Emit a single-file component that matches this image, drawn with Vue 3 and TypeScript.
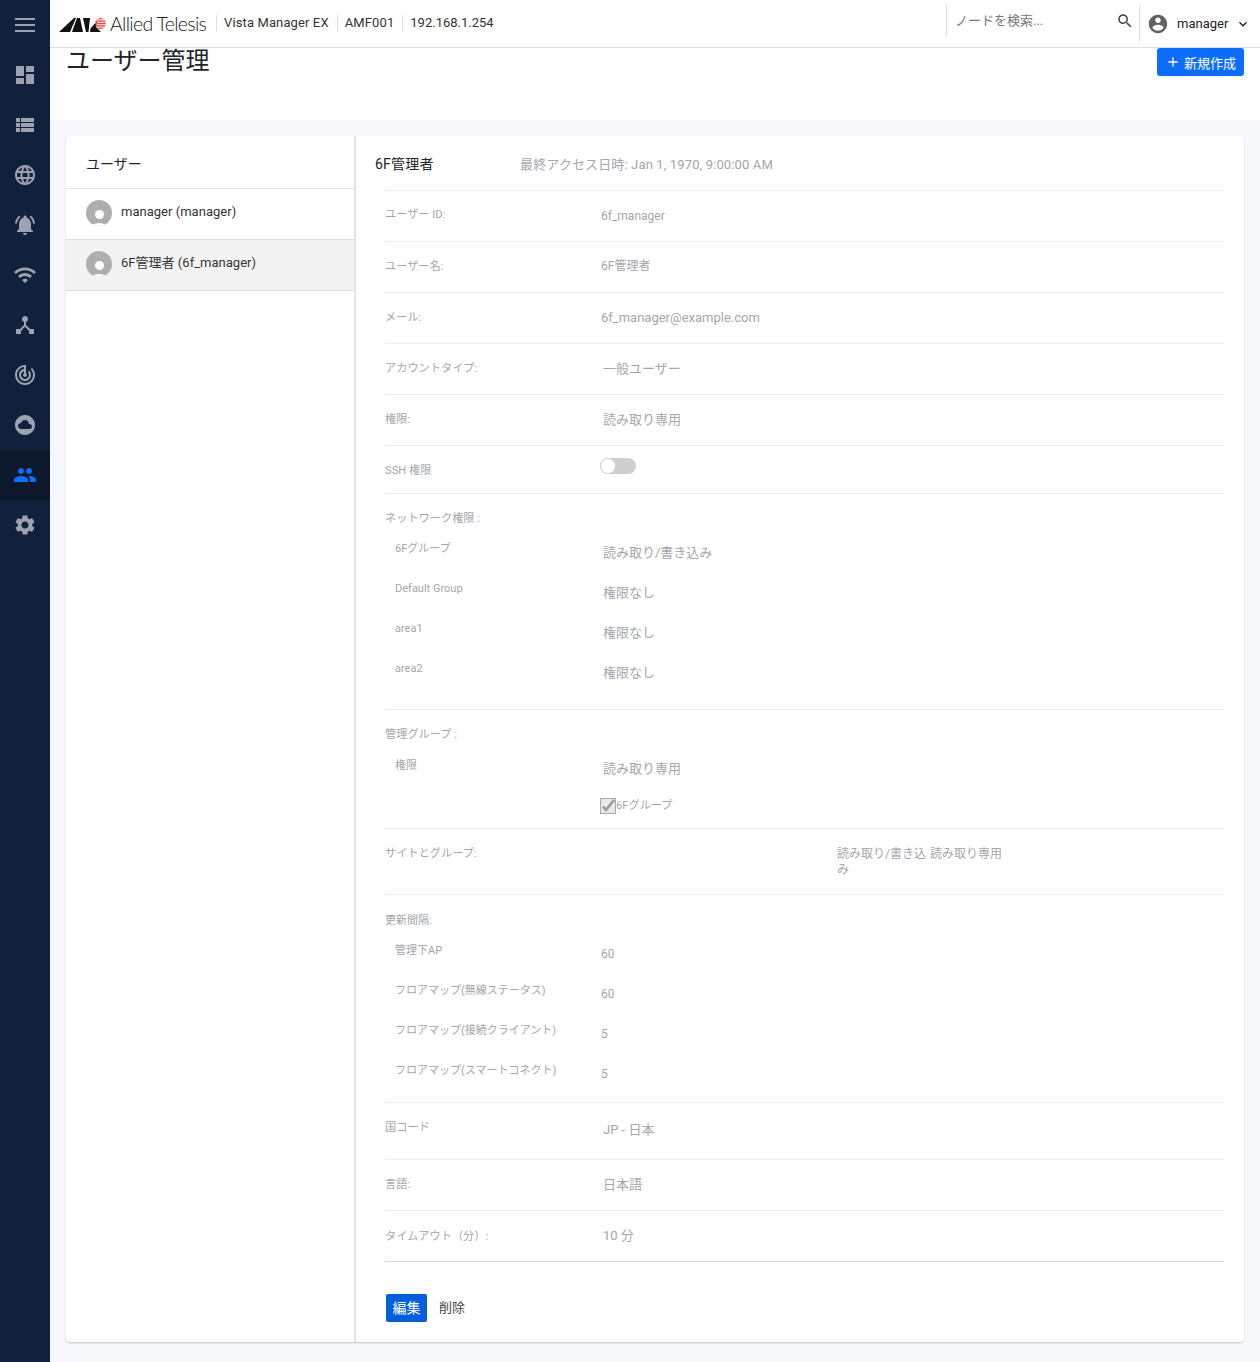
<script setup lang="ts">
const navIcons: string[] = [
  'M3 13h8V3H3v10zm0 8h8v-6H3v6zm10 0h8V11h-8v10zm0-18v6h8V3h-8z',
  'M3 14h4v-4H3v4zm0 5h4v-4H3v4zM3 9h4V5H3v4zm5 5h13v-4H8v4zm0 5h13v-4H8v4zM8 5v4h13V5H8z',
  'M11.99 2C6.47 2 2 6.48 2 12s4.47 10 9.99 10C17.52 22 22 17.52 22 12S17.52 2 11.99 2zm6.93 6h-2.95c-.32-1.25-.78-2.45-1.38-3.56 1.84.63 3.37 1.91 4.33 3.56zM12 4.04c.83 1.2 1.48 2.53 1.91 3.96h-3.82c.43-1.43 1.08-2.76 1.91-3.96zM4.26 14C4.1 13.36 4 12.69 4 12s.1-1.36.26-2h3.38c-.08.66-.14 1.32-.14 2 0 .68.06 1.34.14 2H4.26zm.82 2h2.95c.32 1.25.78 2.45 1.38 3.56-1.84-.63-3.37-1.9-4.33-3.56zm2.95-8H5.08c.96-1.66 2.49-2.93 4.33-3.56C8.81 5.55 8.35 6.75 8.03 8zM12 19.96c-.83-1.2-1.48-2.53-1.91-3.96h3.82c-.43 1.43-1.08 2.76-1.91 3.96zM14.34 14H9.66c-.09-.66-.16-1.32-.16-2 0-.68.07-1.35.16-2h4.68c.09.65.16 1.32.16 2 0 .68-.07 1.34-.16 2zm.25 5.56c.6-1.11 1.06-2.31 1.38-3.56h2.95c-.96 1.65-2.49 2.93-4.33 3.56zM16.36 14c.08-.66.14-1.32.14-2 0-.68-.06-1.34-.14-2h3.38c.16.64.26 1.31.26 2s-.1 1.36-.26 2h-3.38z',
  'M7.58 4.08L6.15 2.65C3.75 4.48 2.17 7.3 2.03 10.5h2c.15-2.65 1.51-4.97 3.55-6.42zm12.39 6.42h2c-.15-3.2-1.73-6.02-4.12-7.85l-1.42 1.43c2.02 1.45 3.39 3.77 3.54 6.42zM18 11c0-3.07-1.64-5.64-4.5-6.32V4c0-.83-.67-1.5-1.5-1.5s-1.5.67-1.5 1.5v.68C7.63 5.36 6 7.92 6 11v5l-2 2v1h16v-1l-2-2v-5zm-6 11c.14 0 .27-.01.4-.04.65-.14 1.18-.58 1.44-1.18.1-.24.15-.5.15-.78h-4c.01 1.1.9 2 2.01 2z',
  'M1 9l2 2c4.97-4.97 13.03-4.97 18 0l2-2C16.93 2.93 7.08 2.93 1 9zm8 8l3 3 3-3c-1.65-1.66-4.34-1.66-6 0zm-4-4l2 2c2.76-2.76 7.24-2.76 10 0l2-2C15.14 9.14 8.87 9.14 5 13z',
  'M17 16l-4-4V8.82C14.16 8.4 15 7.3 15 6c0-1.66-1.34-3-3-3S9 4.34 9 6c0 1.3.84 2.4 2 2.82V12l-4 4H3v5h5v-3.05l4-4.2 4 4.2V21h5v-5h-4z',
  'M19.07 4.93l-1.41 1.41C19.1 7.79 20 9.79 20 12c0 4.42-3.58 8-8 8s-8-3.58-8-8c0-4.08 3.05-7.44 7-7.93v2.02C8.16 6.57 6 9.03 6 12c0 3.31 2.69 6 6 6s6-2.69 6-6c0-1.66-.67-3.16-1.76-4.24l-1.41 1.41C15.55 9.9 16 10.9 16 12c0 2.21-1.79 4-4 4s-4-1.79-4-4c0-1.86 1.28-3.41 3-3.86v2.14c-.6.35-1 .98-1 1.72 0 1.1.9 2 2 2s2-.9 2-2c0-.74-.4-1.38-1-1.72V2h-1C6.48 2 2 6.48 2 12s4.48 10 10 10 10-4.48 10-10c0-2.76-1.12-5.26-2.93-7.07z',
  'M12 2C6.48 2 2 6.48 2 12s4.48 10 10 10 10-4.48 10-10S17.52 2 12 2zm4.5 14H8c-1.66 0-3-1.34-3-3s1.34-3 3-3l.14.01C8.58 8.28 10.13 7 12 7c2.21 0 4 1.79 4 4h.5c1.38 0 2.5 1.12 2.5 2.5S17.88 16 16.5 16z',
  'M16 11c1.66 0 2.99-1.34 2.99-3S17.66 5 16 5c-1.66 0-3 1.34-3 3s1.34 3 3 3zm-8 0c1.66 0 2.99-1.34 2.99-3S9.66 5 8 5C6.34 5 5 6.34 5 8s1.34 3 3 3zm0 2c-2.33 0-7 1.17-7 3.5V19h14v-2.5c0-2.33-4.67-3.5-7-3.5zm8 0c-.29 0-.62.02-.97.05 1.16.84 1.97 1.97 1.97 3.45V19h6v-2.5c0-2.33-4.67-3.5-7-3.5z',
  'M19.14 12.94c.04-.3.06-.61.06-.94 0-.32-.02-.64-.07-.94l2.03-1.58c.18-.14.23-.41.12-.61l-1.92-3.32c-.12-.22-.37-.29-.59-.22l-2.39.96c-.5-.38-1.03-.7-1.62-.94l-.36-2.54c-.04-.24-.24-.41-.48-.41h-3.84c-.24 0-.43.17-.47.41l-.36 2.54c-.59.24-1.13.57-1.62.94l-2.39-.96c-.22-.08-.47 0-.59.22L2.74 8.87c-.12.21-.08.47.12.61l2.03 1.58c-.05.3-.09.63-.09.94s.02.64.07.94l-2.03 1.58c-.18.14-.23.41-.12.61l1.92 3.32c.12.22.37.29.59.22l2.39-.96c.5.38 1.03.7 1.62.94l.36 2.54c.05.24.24.41.48.41h3.84c.24 0 .44-.17.47-.41l.36-2.54c.59-.24 1.13-.56 1.62-.94l2.39.96c.22.08.47 0 .59-.22l1.92-3.32c.12-.22.07-.47-.12-.61l-2.01-1.58zM12 15.6c-1.98 0-3.6-1.62-3.6-3.6s1.62-3.6 3.6-3.6 3.6 1.62 3.6 3.6-1.62 3.6-3.6 3.6z',
]
const activeNav = 8
const users = [
  { name: 'manager (manager)', selected: false },
  { name: '6F管理者 (6f_manager)', selected: true },
]
const networkPerms = [
  { label: '6Fグループ', value: '読み取り/書き込み' },
  { label: 'Default Group', value: '権限なし' },
  { label: 'area1', value: '権限なし' },
  { label: 'area2', value: '権限なし' },
]
const intervals = [
  { label: '管理下AP', value: '60' },
  { label: 'フロアマップ(無線ステータス)', value: '60' },
  { label: 'フロアマップ(接続クライアント)', value: '5' },
  { label: 'フロアマップ(スマートコネクト)', value: '5' },
]
</script>

<template>
  <div class="app">
    <nav class="side">
      <div class="burger"><span></span><span></span><span></span></div>
      <div v-for="(d, i) in navIcons" :key="i" class="nav-item" :class="{ active: i === activeNav }">
        <svg width="24" height="24" viewBox="0 0 24 24"><path :d="d" fill="currentColor" /></svg>
      </div>
    </nav>
    <div class="main">
      <header class="top">
        <div class="logo">
          <svg width="48" height="15" viewBox="0 0 48 15">
            <defs>
              <clipPath id="ball"><circle cx="41.5" cy="5.5" r="5.500" /></clipPath>
            </defs>
            <polygon points="0,14 15,0 17,0 11,14" fill="#111" />
            <polygon points="13,14 18,0 21,0 24,14" fill="#111" />
            <polygon points="24,0 31,0 29.500,14 27,14" fill="#111" />
            <polygon points="31,14 31.500,10.500 38,3 37,9 42,14" fill="#111" />
            <g clip-path="url(#ball)" fill="#ef4b3f">
              <rect x="35" y="0" width="13" height="1.400" />
              <rect x="35" y="2.400" width="13" height="1.400" />
              <rect x="35" y="4.800" width="13" height="1.400" />
              <rect x="35" y="7.200" width="13" height="1.400" />
              <rect x="35" y="9.600" width="13" height="1.400" />
            </g>
          </svg>
          <span class="logo-text">Allied Telesis</span>
        </div>
        <span class="crumb">Vista Manager EX</span>
        <span class="crumb">AMF001</span>
        <span class="crumb ip">192.168.1.254</span>
        <div class="grow"></div>
        <div class="search">
          <span class="search-ph">ノードを検索...</span>
          <svg class="search-ic" width="18" height="18" viewBox="0 0 24 24"><path fill="#444" d="M15.500 14h-.79l-.28-.27C15.410 12.590 16 11.110 16 9.500 16 5.910 13.090 3 9.500 3S3 5.910 3 9.500 5.910 16 9.500 16c1.610 0 3.090-.59 4.230-1.570l.27.28v.79l5 4.990L20.490 19l-4.990-5zm-6 0C7.010 14 5 11.990 5 9.500S7.010 5 9.500 5 14 7.010 14 9.500 11.990 14 9.500 14z" /></svg>
        </div>
        <div class="account">
          <svg width="22" height="22" viewBox="0 0 24 24"><path fill="#616161" d="M12 2C6.480 2 2 6.480 2 12s4.480 10 10 10 10-4.480 10-10S17.520 2 12 2zm0 3c1.660 0 3 1.340 3 3s-1.340 3-3 3-3-1.340-3-3 1.340-3 3-3zm0 14.200c-2.500 0-4.710-1.280-6-3.220.03-1.990 4-3.080 6-3.080 1.990 0 5.970 1.090 6 3.080-1.290 1.940-3.500 3.220-6 3.220z" /></svg>
          <span class="account-name">manager</span>
          <svg width="16" height="16" viewBox="0 0 24 24"><path fill="#222" d="M16.590 8.590L12 13.170 7.410 8.590 6 10l6 6 6-6z" /></svg>
        </div>
      </header>
      <section class="title-bar">
        <h1>ユーザー管理</h1>
        <button class="new-btn">
          <svg width="16" height="16" viewBox="0 0 24 24"><path fill="#fff" d="M19 13h-6v6h-2v-6H5v-2h6V5h2v6h6v2z" /></svg>
          <span class="new-label">新規作成</span>
        </button>
      </section>
      <section class="content">
        <div class="card">
          <aside class="users">
            <div class="users-head">ユーザー</div>
            <div v-for="u in users" :key="u.name" class="user" :class="{ selected: u.selected }">
              <span class="avatar"><i class="head"></i><i class="body"></i></span>
              <span class="user-name">{{ u.name }}</span>
            </div>
          </aside>
          <div class="detail">
            <div class="detail-head">
              <span class="detail-name">6F管理者</span>
              <span class="detail-access">最終アクセス日時: Jan 1, 1970, 9:00:00 AM</span>
            </div>
            <div class="rows">
              <div class="row r50 first"><span class="lab">ユーザー ID:</span><span class="val small">6f_manager</span></div>
              <div class="row r50"><span class="lab">ユーザー名:</span><span class="val small up">6F管理者</span></div>
              <div class="row r50"><span class="lab">メール:</span><span class="val mail">6f_manager@example.com</span></div>
              <div class="row r50"><span class="lab">アカウントタイプ:</span><span class="val big">一般ユーザー</span></div>
              <div class="row r50"><span class="lab">権限:</span><span class="val big">読み取り専用</span></div>
              <div class="row ssh">
                <span class="lab">SSH 権限</span>
                <span class="toggle"><i></i></span>
              </div>

              <div class="block net">
                <div class="block-title">ネットワーク権限 :</div>
                <div v-for="n in networkPerms" :key="n.label" class="sub">
                  <span class="sub-lab">{{ n.label }}</span>
                  <span class="val big">{{ n.value }}</span>
                </div>
              </div>

              <div class="block mg">
                <div class="block-title">管理グループ :</div>
                <div class="sub mg-sub">
                  <span class="sub-lab">権限</span>
                  <span class="val big">読み取り専用</span>
                </div>
                <label class="check">
                  <span class="box">
                    <svg width="14" height="14" viewBox="0 0 14 14"><path d="M2 7.500l3 3.500 8-10" fill="none" stroke="#9a9a9a" stroke-width="2.600" /></svg>
                  </span>
                  6Fグループ
                </label>
              </div>

              <div class="block sites">
                <span class="lab">サイトとグループ:</span>
                <div class="site-vals">
                  <span class="site-val">読み取り/書き込み</span>
                  <span class="site-val">読み取り専用</span>
                </div>
              </div>

              <div class="block intervals">
                <div class="block-title small-title">更新間隔:</div>
                <div v-for="n in intervals" :key="n.label" class="sub">
                  <span class="sub-lab">{{ n.label }}</span>
                  <span class="val small num">{{ n.value }}</span>
                </div>
              </div>

              <div class="row country"><span class="lab">国コード</span><span class="val big">JP - 日本</span></div>
              <div class="row r50"><span class="lab">言語:</span><span class="val big">日本語</span></div>
              <div class="row r50 last"><span class="lab">タイムアウト（分）:</span><span class="val big">10 分</span></div>
            </div>
            <div class="actions">
              <button class="edit">編集</button>
              <button class="del">削除</button>
            </div>
          </div>
        </div>
      </section>
    </div>
  </div>
</template>

<style>
html, body { margin: 0; background: #f7f8fc; }
</style>

<style scoped>
.app {
  display: flex;
  width: 1260px;
  height: 1362px;
  overflow: hidden;
  font-family: Roboto, "Noto Sans CJK JP", sans-serif;
  color: #212529;
}
.side { width: 50px; flex: none; background: #12213b; color: #9ca2af; }
.burger { height: 50px; display: flex; flex-direction: column; justify-content: center; gap: 4px; align-items: center; }
.burger span { width: 20px; height: 2px; background: #9ca2af; }
.nav-item { height: 50px; display: flex; align-items: center; justify-content: center; }
.nav-item.active { background: #0d182c; color: #0d6efd; }
.main { flex: 1; min-width: 0; display: flex; flex-direction: column; }
.top {
  height: 47px; flex: none; display: flex; align-items: center;
  background: #fff; border-bottom: 1px solid #e0e0e0;
}
.logo { display: flex; align-items: center; margin-left: 9px; width: 157px; height: 20px; }
.logo svg { flex: none; margin-top: 3px; }
.logo-text {
  font-family: Lato, sans-serif; font-size: 19.500px; letter-spacing: -.68px;
  margin-left: 3px; color: #222; font-weight: 300; white-space: nowrap;
}
.crumb {
  font-size: 13px; letter-spacing: .12px; line-height: 16px; color: #333; padding: 0 8px 0 7px;
  border-left: 1px solid #ddd; white-space: nowrap; margin-top: -1px;
}
.crumb.ip { letter-spacing: 0; }
.grow { flex: 1; }
.search {
  align-self: flex-start; margin-top: 5px;
  width: 193px; height: 32px; border-left: 1px solid #ddd; display: flex; align-items: center;
  justify-content: space-between; padding: 0 5px 3px 8px; box-sizing: border-box;
}
.search-ph { font-size: 13px; color: #777; }
.search-ic { margin-top: 2px; }
.account {
  align-self: flex-start; margin-top: 5px;
  width: 121px; height: 37px; box-sizing: border-box; border-left: 1px solid #ddd; display: flex; align-items: center;
  padding-left: 7px;
}
.account-name { font-size: 13px; color: #222; margin: 0 7px 0 8px; }
.title-bar {
  height: 72px; flex: none; background: #fff; display: flex; justify-content: space-between;
  align-items: flex-start; padding: 0 16px;
}
h1 { margin: 0; font-size: 24px; font-weight: 400; line-height: 26px; color: #212529; }
.new-btn {
  height: 28px; width: 87px; border: 0; border-radius: 3px; background: #0d6efd; color: #fff;
  font: 13px Roboto, "Noto Sans CJK JP", sans-serif; display: flex; align-items: center; justify-content: center;
  gap: 3px; padding: 0;
}
.new-label { margin-top: 1px; }
.content { flex: 1; background: #f7f8fc; padding: 16px; min-height: 0; }
.card {
  width: 1178px; height: 1206px; display: flex; background: #fff; border-radius: 4px;
  box-shadow: 0 1px 2px rgba(0, 0, 0, .2);
}
.users { width: 290px; box-sizing: border-box; flex: none; border-right: 2px solid #e4e4e4; }
.users-head {
  height: 53px; display: flex; align-items: center; padding: 2px 0 0 20px; box-sizing: border-box; font-size: 14px;
  border-bottom: 1px solid #dfdfdf;
}
.user {
  height: 51px; box-sizing: border-box; display: flex; align-items: center; padding: 0 0 2px 20px; gap: 9px; font-size: 13px;
  border-bottom: 1px solid #dfdfdf; color: #333;
}
.user.selected { background: #f3f3f3; }
.user-name { margin-top: -2px; line-height: 16px; letter-spacing: .02px; }
.avatar {
  position: relative; width: 26px; height: 26px; border-radius: 50%; background: #aeaeae; overflow: hidden; flex: none;
}
.avatar .head {
  position: absolute; left: 8.500px; top: 10px; width: 9px; height: 9px; background: #fff; border-radius: 50%;
}
.avatar .body {
  position: absolute; left: 4px; top: 23px; width: 18px; height: 12px; background: #fff; border-radius: 50%;
}
.detail { flex: 1; min-width: 0; padding: 0 20px 0 29px; }
.detail-head { height: 54px; margin-left: -10px; display: flex; align-items: center; }
.detail-name { width: 145px; font-size: 14px; letter-spacing: .25px; }
.detail-access { font-size: 13px; letter-spacing: .14px; color: #a3a6ad; }
.rows { border-top: 1px solid #eee; }
.row, .block { border-bottom: 1px solid #eee; box-sizing: border-box; }
.row { display: flex; }
.r50 { height: 51px; }
.lab { width: 216px; flex: none; font-size: 11.200px; color: #a3a6ad; padding-top: 17px; line-height: 16px; }
.first .lab { padding-top: 16px; }
.val { color: #a3a6ad; line-height: 16px; }
.val.small { font-size: 12px; padding-top: 17px; }
.val.small.up { padding-top: 16px; }
.val.mail { font-size: 13px; padding-top: 17px; }
.val.big { font-size: 13px; padding-top: 17px; margin-left: 2px; }
.r50.last { border-bottom: 1px solid #d8d8d8; }
.r50.last .lab { padding-top: 18px; }
.ssh { height: 48px; }
.ssh .lab { padding-top: 17px; }
.toggle {
  position: relative; width: 36px; height: 16px; border-radius: 8px; background: #cfcfcf; margin: 12px 0 0 -1px;
}
.toggle i {
  position: absolute; left: 0; top: 0; width: 14px; height: 14px; border-radius: 50%; background: #fff; border: 1px solid #d4d4d4;
}
.block-title { font-size: 11.200px; color: #a3a6ad; line-height: 16px; margin-bottom: 7px; }
.net { height: 216px; padding-top: 17px; }
.sub { display: flex; height: 40px; padding-left: 10px; }
.sub-lab { width: 206px; flex: none; font-size: 11px; color: #a3a6ad; line-height: 16px; padding-top: 7px; box-sizing: border-box; }
.sub .val.big { padding-top: 11px; }
.sub .val.small { padding-top: 11px; }
.mg { height: 119px; padding-top: 17px; }
.mg .block-title { margin-bottom: 7px; }
.mg-sub { height: 40px; }
.mg-sub .sub-lab { padding-top: 8px; }
.check {
  display: flex; align-items: center; margin-left: 215px; font-size: 11.200px; color: #a3a6ad; line-height: 16px; margin-top: 8px;
}
.box {
  width: 14px; height: 14px; border: 1px solid #a8a8a8; background: #e9e9e9; display: block;
}
.box svg { display: block; }
.sites { height: 66px; display: flex; }
.sites .lab { padding-top: 17px; }
.site-vals { display: flex; margin-left: 236px; padding-top: 17px; gap: 4px; }
.site-val { font-size: 12px; line-height: 16px; color: #a3a6ad; }
.site-val:first-child { width: 89px; }
.intervals { height: 208px; padding-top: 18px; }
.intervals .block-title { margin-bottom: 7px; }
.small-title { font-size: 11px; }
.intervals .sub .val.small { padding-top: 10px; }
.country { height: 57px; }
.country .val.big { padding-top: 19px; }
.actions { display: flex; align-items: center; padding: 32px 0 0 1px; gap: 12px; }
.edit {
  width: 41px; height: 28px; border: 0; padding: 0 0 2px; background: #045dd9; color: #fff; border-radius: 2px;
  font: 14px Roboto, "Noto Sans CJK JP", sans-serif;
}
.del {
  border: 0; background: none; padding: 0 0 4px; color: #444; font: 13px Roboto, "Noto Sans CJK JP", sans-serif;
}
</style>
